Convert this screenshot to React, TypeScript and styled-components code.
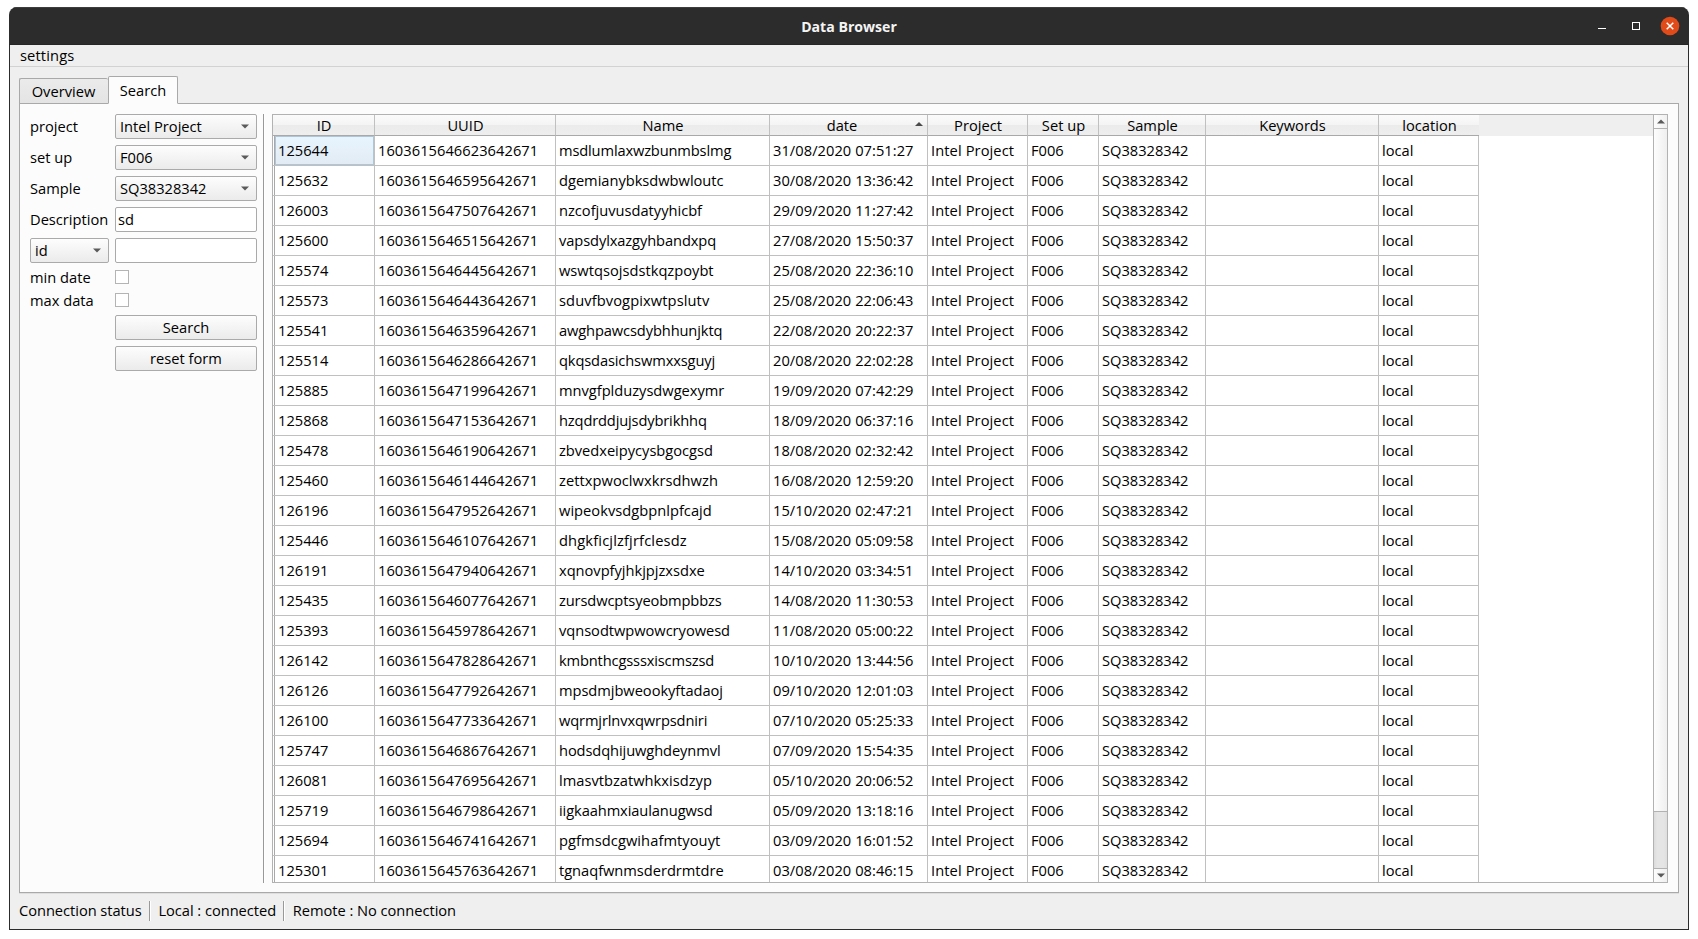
import React from "react";
import styled, { createGlobalStyle, css } from "styled-components";

const line = "#a9a9a9";
const gridLine = "#c0c0c0";

const GlobalStyle = createGlobalStyle`
  * { box-sizing: border-box; }
  body {
    margin: 0;
    background: #fff;
    color: #000;
    font: 14.67px/20px "Open Sans", "Liberation Sans", sans-serif;
    white-space: nowrap;
  }
  button, input {
    font: inherit;
    color: inherit;
    outline: none;
  }
`;

const Desktop = styled.div`
  width: 1698px;
  height: 939px;
  padding: 7px 9px 9px;
  overflow: hidden;
`;

const Window = styled.main`
  display: flex;
  flex-direction: column;
  width: 1680px;
  height: 923px;
  border-radius: 8px 8px 0 0;
  overflow: hidden;
`;

const TitleBar = styled.header`
  display: grid;
  grid-template-columns: 1fr auto 1fr;
  align-items: center;
  height: 38px;
  flex: none;
  padding: 0 9px 0 0;
  background: #2c2c2c;
  border-top: 1px solid #3d3d3d;
  border-bottom: 1px solid #262626;
`;

const Title = styled.h1`
  grid-column: 2;
  margin: 0 0 0 9px;
  padding-top: 2px;
  color: #f4f4f4;
  font-size: 14.1px;
  font-weight: 700;
`;

const WindowButtons = styled.div`
  display: flex;
  justify-content: flex-end;
  align-items: center;
`;

const Body = styled.div`
  display: flex;
  flex-direction: column;
  flex: 1;
  background: #efefef;
  border: 1px solid #2c2c2c;
  border-top: 0;
`;

const MenuBar = styled.nav`
  height: 22px;
  padding-left: 10px;
  border-bottom: 1px solid #d2d2d2;
  letter-spacing: 0.14px;
`;

const Tabs = styled.div`
  display: flex;
  align-items: flex-end;
  height: 37px;
  margin: 0 9px -1px;
  position: relative;
  z-index: 1;
`;

const Tab = styled.div<{ $active?: boolean }>`
  width: ${(p) => (p.$active ? 70 : 89)}px;
  height: ${(p) => (p.$active ? 28 : 26)}px;
  text-align: center;
  border: 1px solid ${line};
  border-radius: 2px 2px 0 0;
  ${(p) =>
    p.$active
      ? css`
          padding-top: 3px;
          background: #fcfcfc;
          border-bottom-color: #fcfcfc;
        `
      : css`
          padding: 2px 1px 0 0;
          border-right: 0;
          background: linear-gradient(#ebebeb, #e4e4e4);
        `}
`;

const Pane = styled.section`
  display: flex;
  height: 790px;
  margin: 0 9px;
  padding: 10px 10px 9px;
  background: #fcfcfc;
  border: 1px solid ${line};
  box-shadow: 0 1px #dedede;
`;

const SearchForm = styled.form`
  display: grid;
  grid-template-columns: 79px 142px;
  grid-template-rows: repeat(5, 25px) repeat(2, 17px) repeat(2, 25px);
  gap: 6px;
  height: max-content;
  align-items: center;
`;

const Label = styled.label`
  padding-bottom: 1px;
`;

const control = css`
  width: 100%;
  height: 25px;
  border: 1px solid #aaa;
  border-radius: 2px;
`;

const Combo = styled.div`
  ${control}
  display: flex;
  align-items: center;
  justify-content: space-between;
  padding: 0 7px 1px 4px;
  background: linear-gradient(#fdfdfd, #ebebeb);
`;

const TextInput = styled.input`
  ${control}
  padding: 0 2px 1px;
  background: #fff;
`;

const PushButton = styled.button`
  ${control}
  grid-column: 2;
  padding: 0 0 1px;
  line-height: 20px;
  background: linear-gradient(#fdfdfd, #ebebeb);
`;

const CheckBox = styled.input.attrs({ type: "checkbox" })`
  appearance: none;
  width: 14px;
  height: 14px;
  margin: 0 0 1px;
  background: #fff;
  border: 1px solid #b4b4b4;
`;

const Splitter = styled.div`
  width: 2px;
  margin: 0 7px 0 6px;
  border-left: 1px solid #999;
  background: #fff;
`;

const TableFrame = styled.div`
  display: flex;
  flex: 1;
  background: #fff;
  border: 1px solid #b2b2b2;
`;

const TableView = styled.div`
  flex: 1;
  min-width: 0;
  height: 767px;
  overflow: hidden;
`;

const columns = "102px 181px 214px 158px 100px 71px 107px 173px 100px";

const HeaderRow = styled.div`
  display: grid;
  grid-template-columns: ${columns};
  height: 21px;
  background: #efefef;
`;

const HeaderCell = styled.div<{ $sorted?: boolean }>`
  display: flex;
  align-items: center;
  justify-content: center;
  position: relative;
  padding: 0 ${(p) => (p.$sorted ? 14 : 0)}px 0 1px;
  background: linear-gradient(#fbfbfb, #f4f4f4 50%, #ebebeb 51%, #eeeeee);
  border-bottom: 1px solid ${line};
  border-right: 1px solid ${gridLine};
  &:last-child {
    border-right: 0;
  }
`;

const SortMark = styled.svg`
  position: absolute;
  right: 4px;
  top: 7px;
`;

const Row = styled.div`
  display: grid;
  grid-template-columns: ${columns};
  width: 1206px;
  height: 30px;
  border-bottom: 1px solid ${gridLine};
`;

const Cell = styled.div<{ $tracking?: number }>`
  display: flex;
  align-items: center;
  padding: 0 0 1px 3px;
  border-right: 1px solid ${gridLine};
  letter-spacing: ${(p) => p.$tracking ?? 0}px;
`;

const IdCell = styled(Cell)<{ $selected: boolean }>`
  margin-left: 1px;
  border-left: 1px solid ${line};
  ${(p) =>
    p.$selected &&
    css`
      background: linear-gradient(#e8f5fe, #e2ebf4);
      box-shadow: inset 0 0 0 1px #afc6d6;
    `}
`;

const ScrollBar = styled.div`
  display: flex;
  flex-direction: column;
  width: 14px;
  border-left: 1px solid #b2b2b2;
`;

const ScrollStep = styled.div`
  display: flex;
  align-items: center;
  justify-content: center;
  height: 13px;
  background: linear-gradient(90deg, #fdfdfd, #f0f0f0);
`;

const ScrollThumb = styled.div`
  height: 684px;
  border: solid #b2b2b2;
  border-width: 1px 0;
  background: linear-gradient(90deg, #fdfdfd, #efefef);
`;

const ScrollTrack = styled.div`
  flex: 1;
  border-bottom: 1px solid #b2b2b2;
  background: linear-gradient(90deg, #dcdcdc, #e5e5e5 25%, #e5e5e5 75%, #dedede);
`;

const StatusBar = styled.footer`
  display: flex;
  align-items: center;
  height: 34px;
  padding: 0 9px;
  margin-top: 1px;
`;

const StatusText = styled.span`
  padding-bottom: 2px;
  letter-spacing: -0.04px;
`;

const StatusDivider = styled.div`
  width: 2px;
  height: 20px;
  margin: 0 7.4px;
  border-left: 1px solid #999;
  background: #fff;
`;

const Arrow = ({ up = false }: { up?: boolean }) => (
  <svg width="8" height="5" viewBox="0 0 8 5">
    <path d={up ? "M0 4.5 4 .5 8 4.5Z" : "M0 .5 4 4.5 8 .5Z"} fill="#5a5a5a" />
  </svg>
);

const Select = ({ value }: { value: string }) => (
  <Combo role="combobox">
    <span>{value}</span>
    <Arrow />
  </Combo>
);

const headers = ["ID", "UUID", "Name", "date", "Project", "Set up", "Sample", "Keywords", "location"];

// id, uuid, name, date, letter-spacing of the name
const records: [string, string, string, string, number][] = [
  ["125644", "1603615646623642671", "msdlumlaxwzbunmbslmg", "31/08/2020 07:51:27", -0.15],
  ["125632", "1603615646595642671", "dgemianybksdwbwloutc", "30/08/2020 13:36:42", -0.02],
  ["126003", "1603615647507642671", "nzcofjuvusdatyyhicbf", "29/09/2020 11:27:42", -0.01],
  ["125600", "1603615646515642671", "vapsdylxazgyhbandxpq", "27/08/2020 15:50:37", -0.1],
  ["125574", "1603615646445642671", "wswtqsojsdstkqzpoybt", "25/08/2020 22:36:10", 0.01],
  ["125573", "1603615646443642671", "sduvfbvogpixwtpslutv", "25/08/2020 22:06:43", 0.1],
  ["125541", "1603615646359642671", "awghpawcsdybhhunjktq", "22/08/2020 20:22:37", -0.12],
  ["125514", "1603615646286642671", "qkqsdasichswmxxsguyj", "20/08/2020 22:02:28", -0.13],
  ["125885", "1603615647199642671", "mnvgfplduzysdwgexymr", "19/09/2020 07:42:29", -0.02],
  ["125868", "1603615647153642671", "hzqdrddjujsdybrikhhq", "18/09/2020 06:37:16", -0.15],
  ["125478", "1603615646190642671", "zbvedxeipycysbgocgsd", "18/08/2020 02:32:42", -0.02],
  ["125460", "1603615646144642671", "zettxpwoclwxkrsdhwzh", "16/08/2020 12:59:20", 0.05],
  ["126196", "1603615647952642671", "wipeokvsdgbpnlpfcajd", "15/10/2020 02:47:21", 0.02],
  ["125446", "1603615646107642671", "dhgkficjlzfjrfclesdz", "15/08/2020 05:09:58", 0.15],
  ["126191", "1603615647940642671", "xqnovpfyjhkjpjzxsdxe", "14/10/2020 03:34:51", -0.02],
  ["125435", "1603615646077642671", "zursdwcptsyeobmpbbzs", "14/08/2020 11:30:53", -0.12],
  ["125393", "1603615645978642671", "vqnsodtwpwowcryowesd", "11/08/2020 05:00:22", -0.04],
  ["126142", "1603615647828642671", "kmbnthcgsssxiscmszsd", "10/10/2020 13:44:56", -0.15],
  ["126126", "1603615647792642671", "mpsdmjbweookyftadaoj", "09/10/2020 12:01:03", -0.05],
  ["126100", "1603615647733642671", "wqrmjrlnvxqwrpsdniri", "07/10/2020 05:25:33", -0.13],
  ["125747", "1603615646867642671", "hodsdqhijuwghdeynmvl", "07/09/2020 15:54:35", -0.1],
  ["126081", "1603615647695642671", "lmasvtbzatwhkxisdzyp", "05/10/2020 20:06:52", 0.01],
  ["125719", "1603615646798642671", "iigkaahmxiaulanugwsd", "05/09/2020 13:18:16", -0.1],
  ["125694", "1603615646741642671", "pgfmsdcgwihafmtyouyt", "03/09/2020 16:01:52", 0.07],
  ["125301", "1603615645763642671", "tgnaqfwnmsderdrmtdre", "03/08/2020 08:46:15", -0.03],
];

export default function App() {
  return (
    <Desktop>
      <GlobalStyle />
      <Window>
        <TitleBar>
          <Title>Data Browser</Title>
          <WindowButtons>
            <svg width="82" height="20" viewBox="0 0 82 20" fill="none">
              <path d="M0 12.5H8" stroke="#fff" />
              <rect x="34.5" y="6.5" width="7" height="7" stroke="#fff" />
              <circle cx="72" cy="10" r="9.3" fill="#e14b1a" />
              <path d="m68.7 6.7 6.6 6.6m0-6.6-6.6 6.6" stroke="#fff" strokeWidth="1.5" />
            </svg>
          </WindowButtons>
        </TitleBar>
        <Body>
          <MenuBar>settings</MenuBar>
          <Tabs>
            <Tab>Overview</Tab>
            <Tab $active>Search</Tab>
          </Tabs>
          <Pane>
            <SearchForm>
              <Label>project</Label>
              <Select value="Intel Project" />
              <Label>set up</Label>
              <Select value="F006" />
              <Label>Sample</Label>
              <Select value="SQ38328342" />
              <Label>Description</Label>
              <TextInput defaultValue="sd" />
              <Select value="id" />
              <TextInput />
              <Label>min date</Label>
              <CheckBox />
              <Label>max data</Label>
              <CheckBox />
              <PushButton type="button">Search</PushButton>
              <PushButton type="button">reset form</PushButton>
            </SearchForm>
            <Splitter />
            <TableFrame>
              <TableView>
                <HeaderRow>
                  {headers.map((h) => (
                    <HeaderCell key={h} $sorted={h === "date"}>
                      {h}
                      {h === "date" && (
                        <SortMark width="8" height="5" viewBox="0 0 8 5">
                          <path d="M0 4 4 0 8 4Z" fill="#4a4a4a" />
                        </SortMark>
                      )}
                    </HeaderCell>
                  ))}
                </HeaderRow>
                {records.map(([id, uuid, name, date, tracking], i) => (
                  <Row key={id}>
                    <IdCell $selected={i === 0}>{id}</IdCell>
                    <Cell $tracking={0.05}>{uuid}</Cell>
                    <Cell $tracking={tracking}>{name}</Cell>
                    <Cell $tracking={0.05}>{date}</Cell>
                    <Cell $tracking={0.1}>Intel Project</Cell>
                    <Cell>F006</Cell>
                    <Cell>SQ38328342</Cell>
                    <Cell />
                    <Cell>local</Cell>
                  </Row>
                ))}
              </TableView>
              <ScrollBar>
                <ScrollStep>
                  <Arrow up />
                </ScrollStep>
                <ScrollThumb />
                <ScrollTrack />
                <ScrollStep>
                  <Arrow />
                </ScrollStep>
              </ScrollBar>
            </TableFrame>
          </Pane>
          <StatusBar>
            <StatusText>Connection status</StatusText>
            <StatusDivider />
            <StatusText>Local : connected</StatusText>
            <StatusDivider />
            <StatusText>Remote : No connection</StatusText>
          </StatusBar>
        </Body>
      </Window>
    </Desktop>
  );
}
